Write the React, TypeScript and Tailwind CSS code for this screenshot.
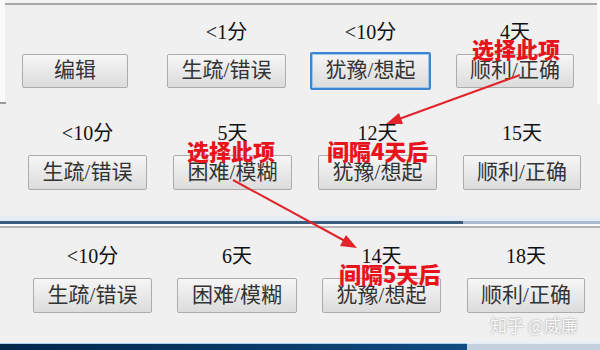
import React from "react";

const FONT = { fontFamily: '"Liberation Serif", "Noto Sans CJK SC", serif' };

function Btn({ text, w, h = 34, focus = false }: { text: string; w: number; h?: number; focus?: boolean }) {
  if (focus) {
    return (
      <div
        className="flex items-center justify-center rounded-[2px] border-2 border-[#3a86d0] bg-gradient-to-b from-[#f4f4f4] to-[#dcdcdc] text-[21px] text-[#333] -mt-[2px]"
        style={{ width: w, height: h + 4 }}
      >
        <div className="flex h-full w-full items-center justify-center border border-[#9cc6ee]">{text}</div>
      </div>
    );
  }
  return (
    <div
      className="flex items-center justify-center rounded-[2px] border border-[#acacac] bg-gradient-to-b from-[#f6f6f6] to-[#dcdcdc] text-[21px] text-[#333]"
      style={{ width: w, height: h }}
    >
      {text}
    </div>
  );
}

function Col({ label, text, w, h, focus, ml }: { label?: string; text: string; w: number; h?: number; focus?: boolean; ml: string }) {
  return (
    <div className={`flex flex-col items-center ${ml}`} style={{ width: w }}>
      <div className="h-[24px] whitespace-nowrap text-[20px] leading-[24px] text-[#111]">{label ?? ""}</div>
      <div className="mt-[10px]">
        <Btn text={text} w={w} h={h} focus={focus} />
      </div>
    </div>
  );
}

const RED = "absolute whitespace-nowrap text-[22px] font-black leading-[22px] text-[#e8141c]";
const CJK = { fontFamily: '"Noto Sans CJK SC", sans-serif' };

export default function App() {
  return (
    <div className="relative h-[350px] w-[600px] overflow-hidden bg-[#f0f0f0]" style={FONT}>
      {/* Panel 1 */}
      <div className="flex h-[104px]">
        <div className="flex w-[5px] flex-col justify-end bg-[#fafafa]">
          <div className="h-[2px] w-[6px] bg-[#9a9a9a]" />
        </div>
        <div className="flex flex-1 flex-col">
          <div className="h-[3px] bg-[#f4f4f4]" />
          <div className="h-[2px] bg-[#a8a8a8]" />
          <div className="flex items-start pl-[17px] pt-[15px]">
            <Col text="编辑" w={106} ml="ml-0" />
            <Col label="<1分" text="生疏/错误" w={119} ml="ml-[39px]" />
            <Col label="<10分" text="犹豫/想起" w={121} ml="ml-[24px]" focus />
            <Col label="4天" text="顺利/正确" w={118} ml="ml-[25px]" />
          </div>
        </div>
        <div className="w-[3px] bg-[#fafafa]" />
      </div>

      {/* Panel 2 */}
      <div className="flex h-[110px] items-start pl-[28px] pt-[17px]">
        <Col label="<10分" text="生疏/错误" w={119} h={35} ml="ml-0" />
        <Col label="5天" text="困难/模糊" w={119} h={35} ml="ml-[26px]" />
        <Col label="12天" text="犹豫/想起" w={119} h={35} ml="ml-[26px]" />
        <Col label="15天" text="顺利/正确" w={118} h={35} ml="ml-[26px]" />
      </div>

      {/* Separator band */}
      <div className="h-[7px] bg-gradient-to-b from-[#f0f0f0] to-[#dfeaf6]" />
      <div className="flex h-[3px]">
        <div className="w-[463px] bg-[#3a5d7e]" />
        <div className="flex-1 bg-[#a9bccf]" />
      </div>
      <div className="h-[2px] bg-[#fbfbfb]" />
      <div className="h-[2px] bg-[#b4b4b4]" />

      {/* Panel 3 */}
      <div className="flex h-[115px] items-start pl-[33px] pt-[16px]">
        <Col label="<10分" text="生疏/错误" w={119} h={35} ml="ml-0" />
        <Col label="6天" text="困难/模糊" w={120} h={35} ml="ml-[25px]" />
        <Col label="14天" text="犹豫/想起" w={119} h={35} ml="ml-[25px]" />
        <Col label="18天" text="顺利/正确" w={118} h={35} ml="ml-[26px]" />
      </div>

      {/* Bottom bar */}
      <div className="flex h-[8px]">
        <div className="w-[467px] border-t border-[#9fd3f0] bg-gradient-to-r from-[#03264a] to-[#114c82]" />
        <div className="flex-1 border-t border-[#e4eef6] bg-[#c4d2df]" />
      </div>

      {/* Annotations */}
      <svg className="pointer-events-none absolute left-0 top-0" width="600" height="350" viewBox="0 0 600 350">
        <line x1="520" y1="75" x2="399" y2="119" stroke="#e0242a" strokeWidth="2" />
        <polygon points="386,124 403,124 399,113" fill="#e0242a" />
        <line x1="233" y1="180" x2="345" y2="241" stroke="#e0242a" strokeWidth="2" />
        <polygon points="357,248 340,246 346,235" fill="#e0242a" />
      </svg>

      <div className={`${RED} left-[472px] top-[37px]`} style={CJK}>选择此项</div>
      <div className={`${RED} left-[187px] top-[139px]`} style={CJK}>选择此项</div>
      <div className={`${RED} left-[327px] top-[139px]`} style={CJK}>间隔4天后</div>
      <div className={`${RED} left-[339px] top-[262px]`} style={CJK}>间隔5天后</div>

      <div
        className="absolute left-[490px] top-[315px] whitespace-nowrap text-[17px] leading-[20px] text-[#fafafa] [text-shadow:0_0_2px_#8a8a8a]"
        style={CJK}
      >
        知乎 @威廉
      </div>
    </div>
  );
}
